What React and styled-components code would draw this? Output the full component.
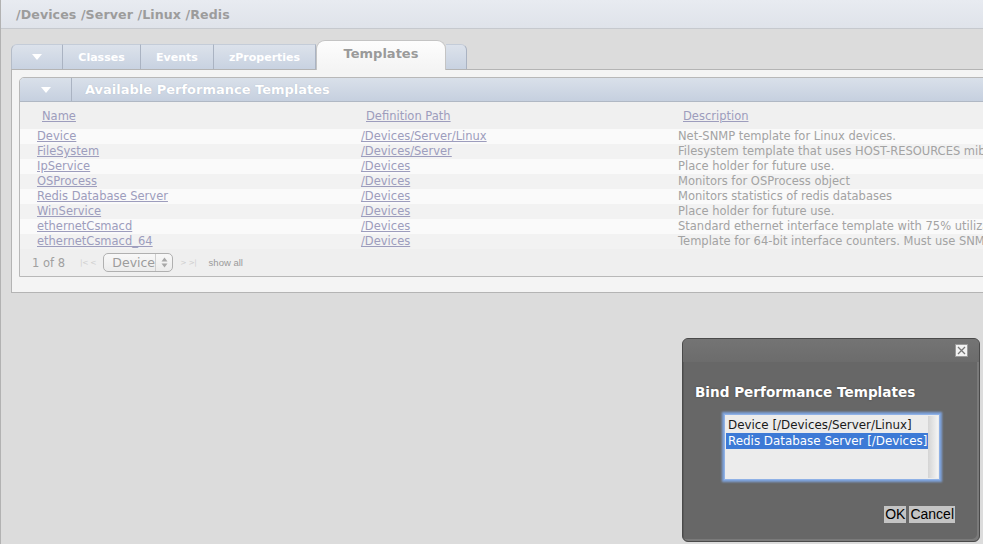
import React from 'react'
import styled, { createGlobalStyle } from 'styled-components'

const GlobalStyle = createGlobalStyle`
  html, body {
    margin: 0;
    padding: 0;
    background: #dcdcdc;
    overflow: hidden;
  }
  body {
    font-family: "DejaVu Sans", Verdana, sans-serif;
  }
`

const templates = [
  { name: 'Device', path: '/Devices/Server/Linux', desc: 'Net-SNMP template for Linux devices.' },
  { name: 'FileSystem', path: '/Devices/Server', desc: 'Filesystem template that uses HOST-RESOURCES mib' },
  { name: 'IpService', path: '/Devices', desc: 'Place holder for future use.' },
  { name: 'OSProcess', path: '/Devices', desc: 'Monitors for OSProcess object' },
  { name: 'Redis Database Server', path: '/Devices', desc: 'Monitors statistics of redis databases' },
  { name: 'WinService', path: '/Devices', desc: 'Place holder for future use.' },
  { name: 'ethernetCsmacd', path: '/Devices', desc: 'Standard ethernet interface template with 75% utilization threshold' },
  { name: 'ethernetCsmacd_64', path: '/Devices', desc: 'Template for 64-bit interface counters. Must use SNMPv2c' },
]

const tabs = [
  { label: 'Classes', width: 78 },
  { label: 'Events', width: 73 },
  { label: 'zProperties', width: 102 },
]

const Style = {
  Page: styled.div`
    position: relative;
    width: 982px;
    height: 544px;
    border-left: 1px solid #b2b2b2;
    background: #dcdcdc;
    overflow: hidden;
  `,

  Breadcrumb: styled.div`
    height: 28px;
    display: flex;
    align-items: center;
    padding-left: 15px;
    background: linear-gradient(#e8ebf1, #dfe3ea);
    border-bottom: 1px solid #c6c9ce;
    color: #9c9c9c;
    font-weight: bold;
    font-size: 12.6px;
    letter-spacing: 0.1px;
  `,

  Content: styled.div`
    padding: 10px 0 0 10px;
  `,

  TabBar: styled.div`
    display: flex;
    align-items: flex-end;
    height: 30px;
  `,

  Tab: styled.div`
    width: ${(p) => p.$width}px;
    height: 25px;
    display: flex;
    align-items: center;
    justify-content: center;
    box-sizing: border-box;
    background: linear-gradient(#dce2eb, #c8d2e1);
    border-right: 1px solid #aab3c2;
    border-top: 1px solid #c4ccd8;
    color: #fff;
    font-weight: bold;
    font-size: 11px;
    border-radius: ${(p) => p.$radius || '0'};
    border-left: ${(p) => (p.$first ? '1px solid #b4bcc8' : 'none')};
  `,

  ActiveTab: styled.div`
    width: 130px;
    height: 30px;
    box-sizing: border-box;
    display: flex;
    align-items: center;
    justify-content: center;
    padding-bottom: 4px;
    margin-bottom: -1px;
    background: linear-gradient(#fdfdfd, #f4f4f4);
    border: 1px solid #c4c4c4;
    border-bottom: none;
    border-radius: 9px 9px 0 0;
    color: #9a9a9a;
    font-weight: bold;
    font-size: 13px;
    position: relative;
    z-index: 1;
  `,

  Arrow: styled.span`
    width: 0;
    height: 0;
    border-left: 5px solid transparent;
    border-right: 5px solid transparent;
    border-top: 6px solid #fff;
  `,

  Panel: styled.div`
    margin-right: -40px;
    height: 224px;
    box-sizing: border-box;
    border: 1px solid #b4b4b4;
    background: #f4f4f4;
    padding: 7px 0 0 7px;
  `,

  SubPanel: styled.div`
    border: 1px solid #b8b8b8;
    border-radius: 5px 0 0 0;
    overflow: hidden;
    background: #efefef;
  `,

  SubHeader: styled.div`
    display: flex;
    height: 23px;
    background: linear-gradient(#d9e0ea, #c6d0df);
    border-bottom: 1px solid #b0b8c4;
    color: #fff;
    font-weight: bold;
    font-size: 13px;
    text-shadow: 0 0 1px rgba(120, 130, 150, 0.4);
  `,

  SubHeaderArrow: styled.div`
    width: 51px;
    display: flex;
    align-items: center;
    justify-content: center;
    border-right: 1px solid #aab3c2;
  `,

  SubHeaderTitle: styled.div`
    display: flex;
    align-items: center;
    padding-left: 13px;
  `,

  Grid: styled.div`
    display: grid;
    grid-template-columns: 324px 317px 1fr;
    font-size: 11.5px;
  `,

  HeadCell: styled.div`
    height: 27px;
    display: flex;
    align-items: center;
    padding-left: 22px;
    background: #f0f0f0;
    white-space: nowrap;
  `,

  Cell: styled.div`
    height: 15px;
    line-height: 15px;
    padding-left: 17px;
    white-space: nowrap;
    overflow: hidden;
    background: ${(p) => (p.$odd ? '#f2f2f2' : '#fafafa')};
    color: #a3a3a3;
  `,

  Link: styled.a`
    color: #9d9dbd;
    text-decoration: underline;
    cursor: pointer;
  `,

  Pager: styled.div`
    height: 27px;
    display: flex;
    align-items: center;
    padding-left: 12px;
    background: #efefef;
    font-size: 11.5px;
    color: #a0a0a0;
  `,

  PageCount: styled.span`
    margin-right: 15px;
  `,

  NavGlyph: styled.span`
    color: #cfcfcf;
    font-size: 7.5px;
    letter-spacing: -0.3px;
    margin-right: ${(p) => p.$gap}px;
  `,

  FakeSelect: styled.div`
    height: 19px;
    width: 70px;
    box-sizing: border-box;
    display: flex;
    align-items: stretch;
    border: 1px solid #b0b0b0;
    border-radius: 5px;
    background: linear-gradient(#f8f8f8, #ececec);
    font-size: 12.5px;
    color: #9c9c9c;
    margin-right: 7px;
  `,

  SelectText: styled.div`
    flex: 1;
    display: flex;
    align-items: center;
    padding-left: 8px;
  `,

  SelectArrows: styled.div`
    width: 16px;
    border-left: 1px solid #cfcfcf;
    display: flex;
    align-items: center;
    justify-content: center;
  `,

  ShowAll: styled.span`
    font-family: "Liberation Sans", Arial, sans-serif;
    font-size: 9.5px;
    color: #9a9a9a;
  `,

  Dialog: styled.div`
    position: absolute;
    left: 681px;
    top: 338px;
    width: 298px;
    height: 204px;
    box-sizing: border-box;
    border: 1px solid #4a4a4a;
    border-radius: 6px;
    background: #676767;
    box-shadow: inset -2px -2px 0 #7a7a7a, inset 1px 1px 0 #5a5a5a;
    display: flex;
    flex-direction: column;
  `,

  DialogBar: styled.div`
    height: 23px;
    display: flex;
    justify-content: flex-end;
    align-items: center;
    padding-right: 11px;
    background: linear-gradient(#747474, #6c6c6c);
    border-radius: 5px 5px 0 0;
  `,

  CloseButton: styled.div`
    width: 13px;
    height: 13px;
    box-sizing: border-box;
    border: 1px solid #9a9a9a;
    background: #f2f2f2;
    display: flex;
    align-items: center;
    justify-content: center;
  `,

  DialogTitle: styled.div`
    margin: 22px 0 0 12px;
    color: #fff;
    font-weight: bold;
    font-size: 13.6px;
    text-shadow: 0 0 2px #444;
  `,

  ListBox: styled.div`
    margin: 14px 0 0 41px;
    width: 216px;
    height: 66px;
    box-sizing: border-box;
    border: 1px solid #8fb1e6;
    box-shadow: 0 0 2px 2px #7ea3dc;
    background: #ececec;
    display: flex;
    padding: 2px 1px 1px;
  `,

  ListItems: styled.div`
    flex: 1;
    display: flex;
    flex-direction: column;
    font-size: 11.9px;
  `,

  ListItem: styled.div`
    height: 16px;
    line-height: 16px;
    padding-left: 2px;
    white-space: nowrap;
    color: ${(p) => (p.$selected ? '#fff' : '#1a1a1a')};
    background: ${(p) => (p.$selected ? '#3d7ad6' : 'transparent')};
  `,

  ScrollTrack: styled.div`
    width: 10px;
    margin-top: -1px;
    background: linear-gradient(90deg, #d4d4d4, #f4f4f4);
  `,

  ButtonRow: styled.div`
    margin-top: auto;
    margin-bottom: 18px;
    display: flex;
    justify-content: flex-end;
    gap: 3px;
    padding-right: 24px;
  `,

  Button: styled.div`
    height: 17px;
    line-height: 17px;
    padding: 0 1px;
    background: #c4c4c4;
    color: #000;
    font-family: "Liberation Sans", Arial, sans-serif;
    font-size: 14px;
  `,
}

function UpDown() {
  return (
    <svg width="7" height="11" viewBox="0 0 7 11">
      <path d="M3.5 0.5 L6.5 4.5 L0.5 4.5 Z" fill="#a8a8a8" />
      <path d="M3.5 10.5 L6.5 6.5 L0.5 6.5 Z" fill="#a8a8a8" />
    </svg>
  )
}

function CloseIcon() {
  return (
    <svg width="9" height="9" viewBox="0 0 9 9">
      <path d="M1 1 L8 8 M8 1 L1 8" stroke="#777" strokeWidth="1.3" />
    </svg>
  )
}

export default function App() {
  return (
    <Style.Page>
      <GlobalStyle />
      <Style.Breadcrumb>/Devices /Server /Linux /Redis</Style.Breadcrumb>
      <Style.Content>
        <Style.TabBar>
          <Style.Tab $width={52} $first $radius="6px 0 0 0">
            <Style.Arrow />
          </Style.Tab>
          {tabs.map((t) => (
            <Style.Tab key={t.label} $width={t.width}>
              {t.label}
            </Style.Tab>
          ))}
          <Style.ActiveTab>Templates</Style.ActiveTab>
          <Style.Tab $width={21} $radius="0 6px 0 0">
            {''}
          </Style.Tab>
        </Style.TabBar>
        <Style.Panel>
          <Style.SubPanel>
            <Style.SubHeader>
              <Style.SubHeaderArrow>
                <Style.Arrow />
              </Style.SubHeaderArrow>
              <Style.SubHeaderTitle>Available Performance Templates</Style.SubHeaderTitle>
            </Style.SubHeader>
            <Style.Grid>
              <Style.HeadCell>
                <Style.Link>Name</Style.Link>
              </Style.HeadCell>
              <Style.HeadCell>
                <Style.Link>Definition Path</Style.Link>
              </Style.HeadCell>
              <Style.HeadCell>
                <Style.Link>Description</Style.Link>
              </Style.HeadCell>
              {templates.map((t, i) => (
                <React.Fragment key={t.name}>
                  <Style.Cell $odd={i % 2 === 1}>
                    <Style.Link>{t.name}</Style.Link>
                  </Style.Cell>
                  <Style.Cell $odd={i % 2 === 1}>
                    <Style.Link>{t.path}</Style.Link>
                  </Style.Cell>
                  <Style.Cell $odd={i % 2 === 1}>{t.desc}</Style.Cell>
                </React.Fragment>
              ))}
            </Style.Grid>
            <Style.Pager>
              <Style.PageCount>1 of 8</Style.PageCount>
              <Style.NavGlyph $gap={7}>|&lt; &lt;</Style.NavGlyph>
              <Style.FakeSelect>
                <Style.SelectText>Device</Style.SelectText>
                <Style.SelectArrows>
                  <UpDown />
                </Style.SelectArrows>
              </Style.FakeSelect>
              <Style.NavGlyph $gap={12}>&gt; &gt;|</Style.NavGlyph>
              <Style.ShowAll>show all</Style.ShowAll>
            </Style.Pager>
          </Style.SubPanel>
        </Style.Panel>
      </Style.Content>

      <Style.Dialog>
        <Style.DialogBar>
          <Style.CloseButton>
            <CloseIcon />
          </Style.CloseButton>
        </Style.DialogBar>
        <Style.DialogTitle>Bind Performance Templates</Style.DialogTitle>
        <Style.ListBox>
          <Style.ListItems>
            <Style.ListItem>Device [/Devices/Server/Linux]</Style.ListItem>
            <Style.ListItem $selected>Redis Database Server [/Devices]</Style.ListItem>
          </Style.ListItems>
          <Style.ScrollTrack />
        </Style.ListBox>
        <Style.ButtonRow>
          <Style.Button>OK</Style.Button>
          <Style.Button>Cancel</Style.Button>
        </Style.ButtonRow>
      </Style.Dialog>
    </Style.Page>
  )
}
